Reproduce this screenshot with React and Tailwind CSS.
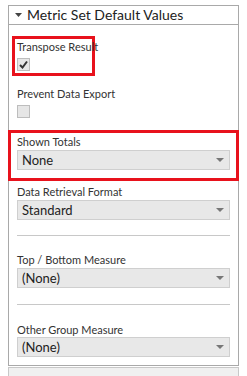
import React from "react";

const font = { fontFamily: 'Lato, "Open Sans", "Liberation Sans", sans-serif' };

function Select({ value }) {
  return (
    <div className="flex h-[20px] items-center justify-between border border-[#cfcfcf] bg-[#e8e8e8] pl-[4px] pr-[5px]">
      <span className="whitespace-nowrap text-[13px] leading-none text-[#222]">{value}</span>
      <svg width="8" height="4" viewBox="0 0 8 4" className="block">
        <path d="M0 0 L8 0 L4 4 Z" fill="#777" />
      </svg>
    </div>
  );
}

function Label({ children }) {
  return <div className="whitespace-nowrap text-[11px] leading-[12px] text-[#333]">{children}</div>;
}

function Checkbox({ checked }) {
  return (
    <div className="flex h-[13px] w-[13px] items-center justify-center border border-[#bdbdbd] bg-[#e6e6e6]">
      {checked && (
        <svg width="9" height="9" viewBox="0 0 9 9">
          <path d="M1 5 L3.5 7.5 L8 1.5" stroke="#333" strokeWidth="2" fill="none" />
        </svg>
      )}
    </div>
  );
}

export default function App() {
  return (
    <div className="h-[376px] w-[247px] overflow-hidden bg-white" style={font}>
      <div className="ml-[8px] mt-[5px] w-[231px] border border-[#a9a9a9] bg-white">
        <div className="flex h-[19px] items-center gap-[5px] border-b border-[#a9a9a9] pl-[6px]">
          <svg width="7" height="4" viewBox="0 0 7 4">
            <path d="M0 0 L7 0 L3.5 4 Z" fill="#444" />
          </svg>
          <span className="whitespace-nowrap text-[14px] leading-none text-[#222]">Metric Set Default Values</span>
        </div>

        <div className="px-[8px] pt-[11px]">
          <div className="ml-[-5px] w-[83px] border-[3px] border-[#e8121c] pb-[2px] pl-[2px] pt-[2px]">
            <Label>Transpose Result</Label>
            <div className="mt-[5px]">
              <Checkbox checked />
            </div>
          </div>

          <div className="mt-[12px]">
            <Label>Prevent Data Export</Label>
            <div className="mt-[5px]">
              <Checkbox />
            </div>
          </div>
        </div>

        <div className="mx-[-1px] mt-[12px] border-[3px] border-[#e8121c] px-[6px] pb-[8px] pt-[3px]">
          <Label>Shown Totals</Label>
          <div className="mt-[2px]">
            <Select value="None" />
          </div>
        </div>

        <div className="px-[8px]">
          <div className="mt-[5px]">
            <Label>Data Retrieval Format</Label>
            <div className="mt-[2px]">
              <Select value="Standard" />
            </div>
          </div>
          <div className="mt-[15px] h-px bg-[#c8c8c8]" />

          <div className="mt-[18px]">
            <Label>Top / Bottom Measure</Label>
            <div className="mt-[2px]">
              <Select value="(None)" />
            </div>
          </div>
          <div className="mt-[16px] h-px bg-[#c8c8c8]" />

          <div className="mt-[19px]">
            <Label>Other Group Measure</Label>
            <div className="mt-[1px]">
              <Select value="(None)" />
            </div>
          </div>
          <div className="h-[8px]" />
        </div>
      </div>
      <div className="ml-[8px] mt-[1px] h-[20px] w-[231px] border border-[#c8c8c8] bg-[#f0f0f0]" />
    </div>
  );
}
